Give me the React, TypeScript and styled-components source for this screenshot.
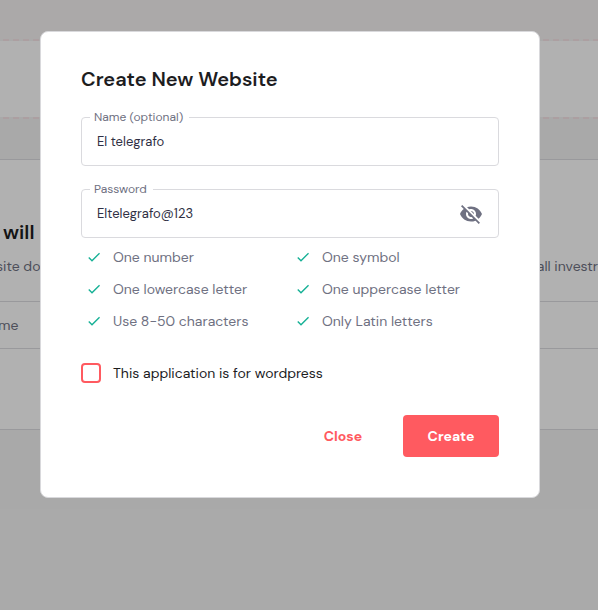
import React, { useState } from 'react';
import styled, { createGlobalStyle } from 'styled-components';

const GlobalStyle = createGlobalStyle`
  * { box-sizing: border-box; }
  body {
    margin: 0;
    background: #f3f3f3;
    font-family: "DM Sans", Inter, "Liberation Sans", sans-serif;
    font-size: 14px;
    line-height: 20px;
    color: #1d1d1f;
  }
  button, input { font: inherit; }
`;

const Screen = styled.div`
  position: relative;
  min-height: 100vh;
  overflow: hidden;
`;

const Banner = styled.div`
  height: 39px;
  background: #f5f2f3;
`;

const DashedEdge = styled.div`
  height: 2px;
  background: repeating-linear-gradient(90deg, #f3f3f3 0 3px, #f7e4e7 3px 9px, #f3f3f3 9px 10px);
`;

const Dropzone = styled.div`
  height: 76px;
  background: #fefefe;
`;

const Panel = styled.section`
  margin-top: 40px;
  background: #fefefe;
  border-top: 1px solid #dcdce0;
  border-bottom: 1px solid #dcdce0;
  white-space: nowrap;
  text-indent: -2px;
`;

const PanelHead = styled.header`
  height: 141px;
  padding: 60px 0 0;
`;

const PanelTitle = styled.h2`
  margin: 0 0 12px;
  font-size: 20px;
  line-height: 24px;
  font-weight: 600;
  text-indent: 3px;
`;

const PanelText = styled.p`
  display: flex;
  justify-content: space-between;
  margin: 0;
  color: #6f7182;
  text-indent: -4px;
`;

const PanelRow = styled.div`
  height: 48px;
  padding: 13px 0;
  border-top: 1px solid #dcdce0;
  border-bottom: 1px solid #dcdce0;
  color: #6f7182;
`;

const PanelBody = styled.div`
  height: 80px;
`;

const Backdrop = styled.div`
  position: absolute;
  inset: 0;
  display: flex;
  justify-content: center;
  align-items: flex-start;
  padding: 31px 58px 31px 40px;
  background: rgba(0, 0, 0, 0.3);
`;

const Dialog = styled.form`
  width: 100%;
  max-width: 500px;
  padding: 35px 40px 40px;
  background: #fff;
  border: 1px solid #d9d9dc;
  border-radius: 8px;
`;

const Title = styled.h1`
  margin: 0 0 19px;
  font-size: 20px;
  line-height: 24px;
  font-weight: 600;
`;

const Field = styled.fieldset`
  display: flex;
  align-items: center;
  min-width: 0;
  height: 56px;
  margin: 0 0 16px;
  padding: 0 15px 6px 8px;
  border: 1px solid #dadade;
  border-radius: 4px;
`;

const Legend = styled.legend`
  padding: 0 6px 0 4px;
  font-size: 12px;
  line-height: 14px;
  color: #6f7182;
`;

const Input = styled.input`
  flex: 1;
  min-width: 0;
  height: 32px;
  padding: 0 7px;
  border: 0;
  outline: 0;
  background: transparent;
  font-size: 13px;
  color: #2f3044;
`;

const IconButton = styled.button`
  display: flex;
  padding: 0;
  border: 0;
  background: none;
  color: #6f7182;
`;

const Rules = styled.ul`
  display: grid;
  grid-template-columns: 1fr 1fr;
  gap: 12px 5px;
  margin: -7px 0 32px;
  padding: 0 0 0 5px;
  list-style: none;
  color: #6f7182;
`;

const Rule = styled.li`
  display: flex;
  align-items: center;
  gap: 11px;
  white-space: nowrap;
`;

const Option = styled.label`
  display: flex;
  align-items: center;
  gap: 12px;
`;

const Checkbox = styled.input`
  appearance: none;
  width: 20px;
  height: 20px;
  margin: 0;
  border: 2px solid #ff5a60;
  border-radius: 4px;
  &:checked { background: #ff5a60; }
`;

const Actions = styled.footer`
  display: flex;
  justify-content: flex-end;
  gap: 12px;
  margin-top: 32px;
`;

const Button = styled.button<{ $primary?: boolean }>`
  min-width: 96px;
  height: 42px;
  border: 0;
  border-radius: 4px;
  background: ${({ $primary }) => ($primary ? '#ff5a60' : 'transparent')};
  color: ${({ $primary }) => ($primary ? '#fff' : '#ff5a60')};
  font-size: 14px;
  font-weight: 700;
`;

const CheckMark = () => (
  <svg width="16" height="16" viewBox="0 0 24 24" fill="#14b095" aria-hidden="true">
    <path d="M9 16.17 4.83 12l-1.42 1.41L9 19 21 7l-1.41-1.41z" />
  </svg>
);

const EyeOff = () => (
  <svg width="24" height="24" viewBox="0 0 24 24" fill="currentColor" aria-hidden="true">
    <path d="M12 7c2.76 0 5 2.24 5 5 0 .65-.13 1.26-.36 1.83l2.92 2.92c1.51-1.26 2.7-2.89 3.43-4.75-1.73-4.39-6-7.5-11-7.5-1.4 0-2.74.25-3.98.7l2.16 2.16C10.74 7.13 11.35 7 12 7zM2 4.27l2.28 2.28.46.46C3.08 8.3 1.78 10.02 1 12c1.73 4.39 6 7.5 11 7.5 1.55 0 3.03-.3 4.38-.84l.42.42L19.73 22 21 20.73 3.27 3 2 4.27zM7.53 9.8l1.55 1.55c-.05.21-.08.43-.08.65 0 1.66 1.34 3 3 3 .22 0 .44-.03.65-.08l1.55 1.55c-.67.33-1.41.53-2.2.53-2.76 0-5-2.24-5-5 0-.79.2-1.53.53-2.2zm4.31-.78 3.15 3.15.02-.16c0-1.66-1.34-3-3-3l-.17.01z" />
  </svg>
);

const rules = [
  'One number',
  'One symbol',
  'One lowercase letter',
  'One uppercase letter',
  'Use 8-50 characters',
  'Only Latin letters',
];

export default function App() {
  const [name, setName] = useState('El telegrafo');
  const [password, setPassword] = useState('Eltelegrafo@123');
  const [visible, setVisible] = useState(true);

  return (
    <Screen>
      <GlobalStyle />
      <Banner />
      <DashedEdge />
      <Dropzone />
      <DashedEdge />
      <Panel>
        <PanelHead>
          <PanelTitle>will</PanelTitle>
          <PanelText>
            <span>site do</span>
            <span>all investr</span>
          </PanelText>
        </PanelHead>
        <PanelRow>me</PanelRow>
        <PanelBody />
      </Panel>
      <Backdrop>
        <Dialog role="dialog" aria-labelledby="dialog-title" onSubmit={(e) => e.preventDefault()}>
          <Title id="dialog-title">Create New Website</Title>
          <Field>
            <Legend><label htmlFor="name">Name (optional)</label></Legend>
            <Input id="name" value={name} onChange={(e) => setName(e.target.value)} />
          </Field>
          <Field>
            <Legend><label htmlFor="password">Password</label></Legend>
            <Input
              id="password"
              type={visible ? 'text' : 'password'}
              value={password}
              onChange={(e) => setPassword(e.target.value)}
            />
            <IconButton type="button" aria-label="Toggle password visibility" onClick={() => setVisible(!visible)}>
              <EyeOff />
            </IconButton>
          </Field>
          <Rules>
            {rules.map((rule) => (
              <Rule key={rule}><CheckMark />{rule}</Rule>
            ))}
          </Rules>
          <Option>
            <Checkbox type="checkbox" />
            This application is for wordpress
          </Option>
          <Actions>
            <Button type="button">Close</Button>
            <Button type="submit" $primary>Create</Button>
          </Actions>
        </Dialog>
      </Backdrop>
    </Screen>
  );
}
